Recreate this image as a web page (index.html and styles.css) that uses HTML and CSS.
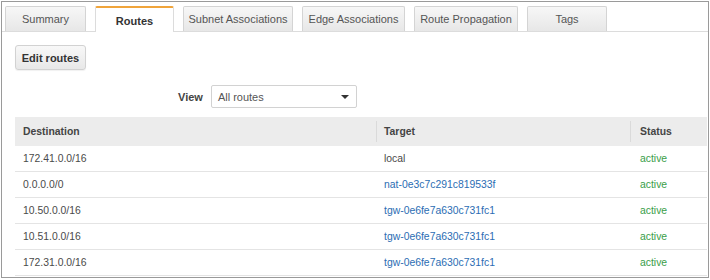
FILE: index.html
```html
<!DOCTYPE html>
<html lang="en">
<head>
  <meta charset="UTF-8" />
  <title>Route Table</title>
  <link rel="stylesheet" href="styles.css">
</head>
<body>
  <div class="frame">
    <div class="tabs">
      <div class="tab tab-summary">Summary</div>
      <div class="tab tab-routes active">Routes</div>
      <div class="tab tab-subnet">Subnet Associations</div>
      <div class="tab tab-edge">Edge Associations</div>
      <div class="tab tab-prop">Route Propagation</div>
      <div class="tab tab-tags">Tags</div>
    </div>

    <div class="panel">
      <button class="btn">Edit routes</button>

      <div class="view-row">
        <span class="view-label">View</span>
        <div class="select">
          <span>All routes</span>
          <span class="caret"></span>
        </div>
      </div>

      <table class="routes">
        <thead>
          <tr>
            <th class="col-dest">Destination</th>
            <th class="col-target"><span class="sep"></span>Target</th>
            <th class="col-status"><span class="sep"></span>Status</th>
          </tr>
        </thead>
        <tbody>
          <tr>
            <td>172.41.0.0/16</td>
            <td>local</td>
            <td class="ok">active</td>
          </tr>
          <tr>
            <td>0.0.0.0/0</td>
            <td><a href="#">nat-0e3c7c291c819533f</a></td>
            <td class="ok">active</td>
          </tr>
          <tr>
            <td>10.50.0.0/16</td>
            <td><a href="#">tgw-0e6fe7a630c731fc1</a></td>
            <td class="ok">active</td>
          </tr>
          <tr>
            <td>10.51.0.0/16</td>
            <td><a href="#">tgw-0e6fe7a630c731fc1</a></td>
            <td class="ok">active</td>
          </tr>
          <tr>
            <td>172.31.0.0/16</td>
            <td><a href="#">tgw-0e6fe7a630c731fc1</a></td>
            <td class="ok">active</td>
          </tr>
        </tbody>
      </table>
    </div>
  </div>
</body>
</html>
```

FILE: styles.css
```css
body {
  margin: 0;
  padding: 0;
  font-family: "Liberation Sans", Arial, sans-serif;
  background: #fff;
  color: #444;
}

.frame {
  box-sizing: border-box;
  width: 708px;
  height: 277px;
  margin: 1px 0 0 1px;
  border: 1px solid #9a9a9a;
  overflow: hidden;
}

/* Tab-Leiste */
.tabs {
  display: flex;
  gap: 9px;
  padding: 4px 0 0 3px;
  border-bottom: 1px solid #dcdcdc;
  height: 25px;
}

.tab {
  box-sizing: border-box;
  height: 25px;
  display: flex;
  align-items: center;
  justify-content: center;
  white-space: nowrap;
  font-size: 11px;
  color: #555;
  background: linear-gradient(#f7f7f7, #e7e7e7);
  border: 1px solid #d4d4d4;
  border-bottom: none;
  border-radius: 2px 2px 0 0;
}

.tab.active {
  height: 26px;
  padding-top: 1px;
  background: #fff;
  border-color: #dcdcdc;
  border-top: 2px solid #f0a43a;
  font-weight: bold;
  color: #333;
}

.tab-summary { width: 81px; }
.tab-routes { width: 79px; }
.tab-subnet { width: 110px; }
.tab-edge { width: 103px; }
.tab-prop { width: 104px; }
.tab-tags { width: 80px; }

/* Inhalt */
.panel {
  padding: 13px 0 0 13px;
}

.btn {
  box-sizing: border-box;
  width: 71px;
  height: 25px;
  padding: 0;
  font-family: inherit;
  font-size: 11px;
  font-weight: bold;
  color: #333;
  background: linear-gradient(#f8f8f8, #e8e8e8);
  border: 1px solid #d2d2d2;
  border-radius: 3px;
  box-shadow: 0 1px 1px rgba(0, 0, 0, 0.06);
}

.view-row {
  display: flex;
  align-items: center;
  gap: 8px;
  margin-top: 15px;
  padding-left: 163px;
}

.view-label {
  font-size: 11px;
  font-weight: bold;
  color: #444;
}

.select {
  box-sizing: border-box;
  width: 146px;
  height: 23px;
  display: flex;
  align-items: center;
  justify-content: space-between;
  padding: 0 7px 0 6px;
  font-size: 11px;
  color: #555;
  border: 1px solid #d2d2d2;
  border-radius: 2px;
}

.caret {
  width: 0;
  height: 0;
  border-left: 4px solid transparent;
  border-right: 4px solid transparent;
  border-top: 4px solid #333;
}

/* Tabelle */
.routes {
  margin-top: 9px;
  width: 692px;
  border-collapse: collapse;
  font-size: 10.4px;
}

.routes th {
  position: relative;
  height: 29px;
  padding: 0 0 0 8px;
  text-align: left;
  font-weight: bold;
  color: #444;
  background: #ececec;
}

.routes th .sep {
  position: absolute;
  left: 0;
  top: 4px;
  bottom: 4px;
  border-left: 1px solid #dadada;
}

.col-dest { width: 353px; }
.col-target { width: 246px; }
.routes th.col-status { padding-left: 10px; }

.routes td {
  height: 25px;
  padding: 0 0 0 8px;
  color: #4a4a4a;
  border-bottom: 1px solid #e4e4e4;
}

.routes td.ok {
  padding-left: 10px;
  color: #3a9e48;
}

.routes a {
  color: #2b6db3;
  text-decoration: none;
}
```
